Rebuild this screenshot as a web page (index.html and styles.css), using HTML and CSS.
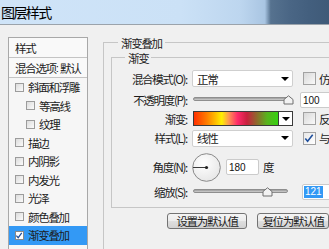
FILE: index.html
```html
<!DOCTYPE html>
<html>
<head>
<meta charset="utf-8">
<title>图层样式</title>
<link rel="stylesheet" href="styles.css">
</head>
<body>
<div class="titlebar"><span class="title">图层样式</span></div>
<div class="main">
  <div class="sidebar">
    <div class="hdr">样式</div>
    <div class="hdr">混合选项<span class="colon">:</span>默认</div>
    <div class="item"><span class="cb"></span>斜面和浮雕</div>
    <div class="item sub"><span class="cb"></span>等高线</div>
    <div class="item sub"><span class="cb"></span>纹理</div>
    <div class="item"><span class="cb"></span>描边</div>
    <div class="item"><span class="cb"></span>内阴影</div>
    <div class="item"><span class="cb"></span>内发光</div>
    <div class="item"><span class="cb"></span>光泽</div>
    <div class="item"><span class="cb"></span>颜色叠加</div>
    <div class="item selected"><span class="cb on"><svg width="9" height="9" viewBox="0 0 9 9"><path d="M1.5 4.6 L3.6 7 L7.6 1.6" fill="none" stroke="#1f4f9c" stroke-width="1.4"/></svg></span>渐变叠加</div>
    <div class="item"><span class="cb"></span>图案叠加</div>
  </div>
  <div class="content">
    <div class="group outer">
      <div class="legend lg-outer">渐变叠加</div>
      <div class="group inner">
        <div class="legend lg-inner">渐变</div>
        <div class="rows">
          <div class="row r1">
            <span class="lbl">混合模式(O):</span>
            <div class="select"><span>正常</span><i class="arrow"></i></div>
            <span class="chk"></span><span class="opt">仿色</span>
          </div>
          <div class="row r2">
            <span class="lbl">不透明度(P):</span>
            <div class="slider s1"><div class="track"></div>
              <svg class="thumb t1" width="11" height="10" viewBox="0 0 11 10"><path d="M1 9 L1 4.5 L5.5 0.8 L10 4.5 L10 9 Z" fill="#f2f2f2" stroke="#6f6f6f" stroke-linejoin="round"/></svg>
            </div>
            <div class="input in1"><span class="num">100</span></div>
          </div>
          <div class="row r3">
            <span class="lbl">渐变:</span>
            <div class="gradbox"><div class="grad"></div><div class="gbtn"><i class="arrow"></i></div></div>
            <span class="chk"></span><span class="opt">反向</span>
          </div>
          <div class="row r4">
            <span class="lbl">样式(L):</span>
            <div class="select"><span>线性</span><i class="arrow"></i></div>
            <span class="chk"><svg width="13" height="13" viewBox="0 0 13 13"><path d="M2.5 6.5 L5 9.5 L10.5 2.5" fill="none" stroke="#1f4f9c" stroke-width="1.7"/></svg></span><span class="opt">与图层对齐</span>
          </div>
          <div class="row r5">
            <span class="lbl">角度(N):</span>
            <svg class="dial" width="29" height="29" viewBox="0 0 29 29">
              <defs><radialGradient id="dg" cx="0.4" cy="0.35" r="0.7"><stop offset="0" stop-color="#ffffff"/><stop offset="1" stop-color="#e6e6e6"/></radialGradient></defs>
              <circle cx="14.5" cy="14.5" r="13.8" fill="url(#dg)" stroke="#8a8a8a"/>
              <line x1="1" y1="14.5" x2="14.5" y2="14.5" stroke="#3a3a3a" stroke-width="1"/>
              <circle cx="14.5" cy="14.5" r="1.6" fill="#222"/>
            </svg>
            <div class="input in2"><span class="num">180</span></div>
            <span class="unit">度</span>
          </div>
          <div class="row r6">
            <span class="lbl">缩放(S):</span>
            <div class="slider s2"><div class="track"></div>
              <svg class="thumb t2" width="11" height="10" viewBox="0 0 11 10"><path d="M1 9 L1 4.5 L5.5 0.8 L10 4.5 L10 9 Z" fill="#f2f2f2" stroke="#6f6f6f" stroke-linejoin="round"/></svg>
            </div>
            <div class="input in3"><span class="num sel">121</span></div>
          </div>
        </div>
      </div>
      <div class="btns">
        <div class="btn b1">设置为默认值</div>
        <div class="btn b2">复位为默认值</div>
      </div>
    </div>
  </div>
</div>
</body>
</html>
```
FILE: styles.css
```css
* { box-sizing: border-box; margin: 0; padding: 0; }
html, body { width: 329px; height: 249px; overflow: hidden; }
body {
  background: #f0f0f0;
  font-family: "Noto Sans CJK SC", "Liberation Sans", sans-serif;
  font-size: 11.5px;
  letter-spacing: -1.3px;
  color: #1c1c1c;
}
.titlebar {
  height: 25px;
  border-bottom: 1px solid #9ba3ab;
  background: linear-gradient(to right, #cfe4f8 0%, #cbe1f6 55%, #bdd6ef 73%, #a9c5e2 80.5%, #56728f 82.3%, #4a6685 88%, #435f7e 94%, #3f5a78 100%);
  display: flex;
  align-items: center;
  padding-left: 1px;
}
.title { font-size: 14px; letter-spacing: -1.6px; color: #000; }
.main { display: flex; padding-left: 8px; height: 224px; }
.sidebar {
  margin-top: 12px;
  width: 80px;
  flex: none;
  border: 1px solid #a8a8a8;
  border-bottom: none;
  background: #f6f6f6;
}
.hdr {
  height: 20px;
  border-bottom: 1px solid #c4c4c4;
  display: flex;
  align-items: center;
  padding-left: 6px;
  background: #f9f9f9;
  white-space: nowrap;
  overflow: hidden;
}
.colon { letter-spacing: 0; font-family: "Liberation Sans", sans-serif; margin: 0 1px 0 0; }
.item {
  height: 18.5px;
  display: flex;
  align-items: center;
  padding-left: 6px;
  white-space: nowrap;
}
.item.sub { padding-left: 17px; }
.item.selected { background: #3399f5; }
.cb {
  width: 9px; height: 9px;
  flex: none;
  border: 1px solid #9c9c9c;
  background: linear-gradient(135deg, #dcdcdc, #fbfbfb);
  margin-right: 4px;
  display: flex;
}
.cb.on { background: #fff; border-color: #8a8a8a; }
.cb svg { margin: -1px 0 0 -1px; }
.content { margin-left: 15px; margin-top: 17px; width: 260px; flex: none; }
.group { border: 1px solid #c6c6c6; }
.outer { height: 260px; }
.inner { margin: 7px 0 0 7px; width: 245px; }
.legend {
  width: fit-content;
  height: 14px;
  line-height: 14px;
  margin-top: -7px;
  padding: 0 3px;
  background: #f0f0f0;
}
.lg-outer { margin-left: 14px; }
.lg-inner { margin-left: 13px; }
.rows { padding: 2px 0 8px 0; }
.row { display: flex; align-items: center; white-space: nowrap; }
.r1 { height: 23px; }
.r2 { height: 20px; }
.r3 { height: 17px; }
.r4 { height: 22px; }
.r5 { height: 36px; }
.r6 { height: 14px; }
.lbl { width: 75px; flex: none; text-align: right; margin-right: 5px; }
.select {
  width: 101px; height: 17px; flex: none;
  background: #fff;
  border: 1px solid #cfcfcf;
  border-radius: 2px;
  display: flex; align-items: center; justify-content: space-between;
  padding: 0 3px 0 4px;
}
.arrow {
  width: 0; height: 0;
  border-left: 4px solid transparent;
  border-right: 4px solid transparent;
  border-top: 4px solid #000;
}
.chk {
  width: 13px; height: 13px; flex: none;
  margin-left: 10px;
  border: 1px solid #a2a2a2;
  background: linear-gradient(135deg, #d9d9d9, #f9f9f9);
  display: flex;
}
.chk svg { margin: -1px 0 0 -1px; }
.r4 .chk { background: linear-gradient(135deg, #e8e8e8, #ffffff); }
.opt { margin-left: 3px; }
.slider { position: relative; height: 10px; flex: none; }
.s1 { width: 97px; margin-left: 1px; }
.s2 { width: 95px; margin-left: 1px; }
.track {
  margin-top: 2px;
  height: 4px;
  border: 1px solid #8e8e8e;
  border-radius: 2px;
  background: linear-gradient(#9a9a9a, #d0d0d0);
}
.thumb { position: absolute; top: 0; }
.t1 { left: 90px; }
.t2 { left: 69px; }
.input {
  height: 16px; flex: none;
  background: #fff;
  border: 1px solid #cbcbcb;
  border-radius: 2px;
  display: flex; align-items: center;
  padding-left: 2px;
}
.num { font-family: "Liberation Sans", sans-serif; font-size: 10px; letter-spacing: 0; color: #111; }
.num.sel { background: #3399f5; color: #fff; line-height: 12px; padding: 0 1px; }
.in1 { width: 40px; margin-left: 10px; }
.in2 { width: 33px; margin-left: 5px; }
.in3 { width: 40px; margin-left: 14px; padding-left: 1px; }
.unit { margin-left: 4px; }
.gradbox {
  width: 100px; height: 15px; flex: none;
  margin-left: 1px;
  border: 1px solid #3a3a3a;
  display: flex;
}
.grad {
  flex: 1;
  background: linear-gradient(to right, #ff3000 0%, #ff7c00 15%, #ffc000 26%, #fff000 33%, #ff9a50 41%, #ff2a6a 52%, #c8203e 63%, #8e6a2c 75%, #58b41e 87%, #36d012 100%);
}
.gbtn {
  width: 14px; flex: none;
  border-left: 1px solid #3a3a3a;
  background: #fff;
  display: flex; align-items: center; justify-content: center;
}
.dial { flex: none; }
.btns { display: flex; gap: 10px; margin: 5px 0 0 63px; }
.btn {
  height: 16px;
  border: 1px solid #737373;
  border-radius: 3px;
  background: linear-gradient(#f4f4f4 0%, #ececec 48%, #dedede 52%, #d2d2d2 100%);
  display: flex; align-items: center; justify-content: center;
  white-space: nowrap;
}
.b1 { width: 80px; }
.b2 { width: 72px; }
```
